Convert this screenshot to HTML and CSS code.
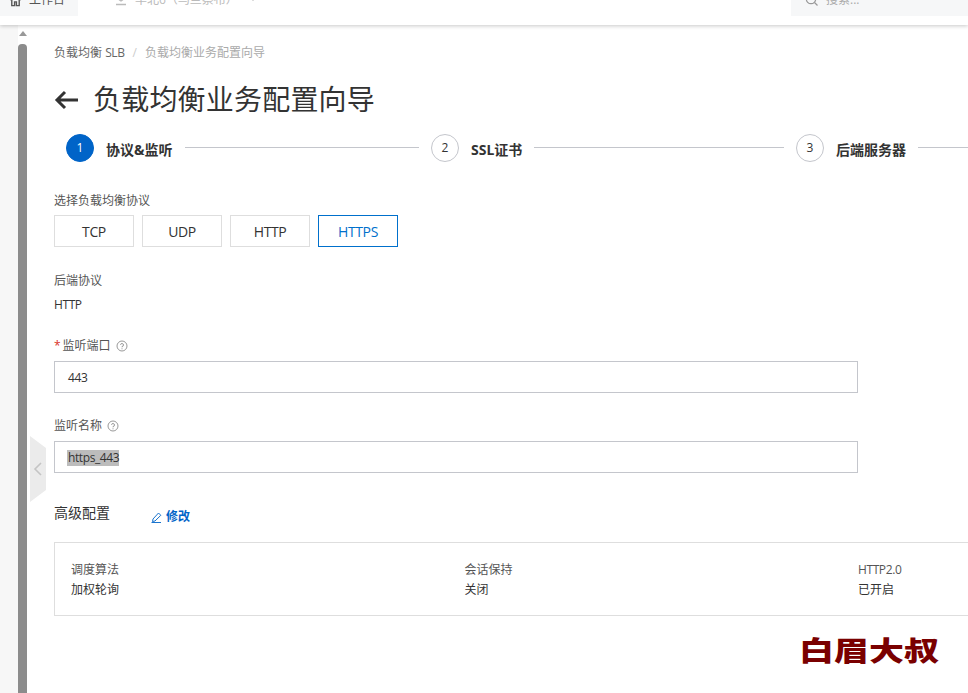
FILE: index.html
```html
<!DOCTYPE html>
<html lang="zh">
<head>
<meta charset="utf-8">
<title>负载均衡业务配置向导</title>
<link rel="stylesheet" href="styles.css">
</head>
<body>
<div class="app">
  <header class="topbar">
    <div class="topbar-inner">
      <div class="workbench">
        <svg class="home-icon" width="13" height="14" viewBox="0 0 14 14"><path d="M1 7 7 2l6 5M3 6v7h3V9h2v4h3V6" fill="none" stroke="#555" stroke-width="1.5"/></svg>
        <span>工作台</span>
      </div>
      <div class="region">
        <svg class="region-icon" width="12" height="16" viewBox="0 0 12 16"><path d="M6 1a3.500 3.500 0 0 1 3.500 3.500C9.500 7 6 9 6 9S2.500 7 2.500 4.500A3.500 3.500 0 0 1 6 1ZM1 12.500h10" fill="none" stroke="#bbb" stroke-width="1.300"/></svg>
        <span>华北6（乌兰察布）</span>
        <svg class="caret" width="8" height="6" viewBox="0 0 8 6"><path d="M0 0h8L4 4z" fill="#bbb"/></svg>
      </div>
      <div class="search">
        <svg class="search-icon" width="14" height="14" viewBox="0 0 14 14"><circle cx="6" cy="6" r="4.700" fill="none" stroke="#999" stroke-width="1.200"/><path d="m9.500 9.500 3 3" stroke="#999" stroke-width="1.200"/></svg>
        <span>搜索...</span>
      </div>
    </div>
  </header>
  <div class="workspace">
    <aside class="rail">
      <div class="scroll-arrow"></div>
      <div class="scroll-thumb"></div>
    </aside>
    <main class="content">
      <nav class="crumbs"><span>负载均衡 <span class="latin">SLB</span></span><i>/</i><span class="crumb-current">负载均衡业务配置向导</span></nav>
      <div class="title-row">
        <svg class="back" width="24" height="20" viewBox="0 0 24 20"><path d="M24 10H2.500M11 2 3 10l8 8" fill="none" stroke="#333" stroke-width="3"/></svg>
        <h1>负载均衡业务配置向导</h1>
      </div>
      <ol class="steps">
        <li class="step active"><span class="num">1</span><span class="step-label">协议&amp;监听</span><span class="step-line"></span></li>
        <li class="step"><span class="num">2</span><span class="step-label">SSL证书</span><span class="step-line"></span></li>
        <li class="step"><span class="num">3</span><span class="step-label">后端服务器</span><span class="step-line"></span></li>
      </ol>
      <div class="label first">选择负载均衡协议</div>
      <div class="protocols">
        <button class="proto">TCP</button>
        <button class="proto">UDP</button>
        <button class="proto">HTTP</button>
        <button class="proto selected">HTTPS</button>
      </div>
      <div class="label backend">后端协议</div>
      <div class="value latin">HTTP</div>
      <div class="label port"><span class="req">*</span>监听端口<svg class="help" width="12" height="12" viewBox="0 0 12 12"><use href="#help"/></svg></div>
      <div class="field latin">443</div>
      <div class="label name">监听名称<svg class="help" width="12" height="12" viewBox="0 0 12 12"><use href="#help"/></svg></div>
      <div class="field latin"><span class="sel">https_443</span></div>
      <div class="adv-row">
        <h2>高级配置</h2>
        <a class="edit"><svg width="11" height="11" viewBox="0 0 11 11"><path d="M7.500 1 9.800 3.300 4 9 1.500 9.500 2 7zM.5 10.500h9.500" fill="none" stroke="#0064c8" stroke-width=".9"/></svg>修改</a>
      </div>
      <div class="summary">
        <div class="cell"><div>调度算法</div><div class="val">加权轮询</div></div>
        <div class="cell"><div>会话保持</div><div class="val">关闭</div></div>
        <div class="cell"><div class="latin">HTTP2.0</div><div class="val">已开启</div></div>
      </div>
    </main>
  </div>
  <div class="collapse"><svg width="10" height="14" viewBox="0 0 10 14"><path d="M8 1 2 7l6 6" fill="none" stroke="#c4c4c4" stroke-width="1.600"/></svg></div>
  <div class="watermark">白眉大叔</div>
</div>
<svg class="defs" width="0" height="0"><symbol id="help" viewBox="0 0 12 12"><circle cx="6" cy="6" r="5" fill="none" stroke="#999"/><path d="M4.500 4.800A1.500 1.500 0 1 1 6 6.500v.8M6 8.300v1" fill="none" stroke="#999"/></symbol></svg>
</body>
</html>
```
FILE: styles.css
```css
* { box-sizing: border-box; }
html, body { margin: 0; height: 100%; overflow: hidden; background: #fff; }
body { font: 12px/16px "Open Sans", "Noto Sans CJK SC", sans-serif; color: #333; }
.app { position: relative; width: 968px; height: 693px; overflow: hidden; display: flex; flex-direction: column; }
.defs { position: absolute; }
.latin { letter-spacing: -.4px; }

.topbar { flex: none; height: 25px; overflow: hidden; background: #fff; box-shadow: 0 1px 4px rgba(0,0,0,.22); position: relative; z-index: 2; }
.topbar-inner { display: flex; align-items: center; height: 32px; margin-top: -16px; font-size: 12px; }
.workbench { width: 78px; height: 32px; background: #f6f7f8; display: flex; align-items: center; padding-left: 9px; gap: 7px; color: #555; }
.region { display: flex; align-items: center; margin-left: 37px; color: #bbb; }
.region-icon { margin-right: 8px; }
.caret { margin-left: 11px; }
.search { margin-left: auto; width: 177px; height: 32px; background: #f6f7f8; display: flex; align-items: center; padding-left: 14px; gap: 7px; color: #aaa; }

.workspace { flex: 1; display: flex; min-height: 0; }
.rail { flex: none; width: 30px; padding-left: 18px; background: linear-gradient(to right, #f7f7f7 18px, #fff 18px); display: flex; flex-direction: column; }
.scroll-arrow { margin: 6px 0 0 1px; width: 0; height: 0; border: 4px solid transparent; border-top: 0; border-bottom: 5px solid #999; }
.scroll-thumb { width: 9px; flex: 1; margin-top: 8px; background: #8c8c8c; border-radius: 4px 4px 0 0; }

.content { flex: 1; padding: 20px 0 0 24px; min-width: 0; }
.crumbs { display: flex; align-items: center; color: #666; height: 16px; }
.crumbs i { font-style: normal; color: #ccc; margin: 0 8px; }
.crumb-current { color: #aaa; }
.title-row { display: flex; align-items: center; margin-top: 18px; height: 40px; }
.back { margin: 2px 15px 0 0; }
h1 { margin: 0 0 2px; font-size: 28px; font-weight: 400; line-height: 38px; letter-spacing: .2px; color: #333; white-space: nowrap; font-family: "Noto Sans CJK SC", sans-serif; }
.steps { list-style: none; margin: 15px 0 0 12px; padding: 0; display: flex; width: 1100px; height: 28px; }
.step { flex: none; width: 365px; display: flex; align-items: center; }
.num { flex: none; width: 28px; height: 28px; border-radius: 50%; border: 1px solid #c4c6cc; display: flex; align-items: center; justify-content: center; }
.active .num { background: #0064c8; border-color: #0064c8; color: #fff; }
.step-label { margin: 3px 0 0 12px; font-size: 14px; font-weight: 700; white-space: nowrap; color: #333; font-family: "Noto Sans", "Noto Sans CJK SC", sans-serif; }
.step-line { flex: 1; height: 1px; margin: -2px 12px 0; background: #c4c6cc; }

.label { color: #555; height: 16px; }
.first { margin-top: 31px; }
.protocols { display: flex; gap: 8px; margin-top: 6px; }
.proto { width: 80px; height: 32px; padding: 1px 0 0; border: 1px solid #dedede; background: #fff; font: inherit; font-size: 14px; letter-spacing: -.4px; color: #333; }
.selected { border-color: #0070cc; color: #0070cc; }
.backend { margin-top: 26px; }
.value { margin-top: 8px; height: 16px; }
.port { margin-top: 25px; }
.req { color: #d93026; margin-right: 2px; }
.help { vertical-align: -2px; margin-left: 5px; }
.field { width: 804px; height: 32px; margin-top: 7px; border: 1px solid #c4c6cc; padding: 1px 12px 0 13px; line-height: 30px; }
.sel { background: #bcbcbc; display: inline-block; line-height: 16px; margin-left: -1px; padding-left: 1px; }
.name { margin-top: 25px; }
.adv-row { display: flex; align-items: flex-end; margin-top: 32px; height: 18px; }
h2 { margin: 0 0 1px; font-size: 14px; font-weight: 400; line-height: 18px; color: #333; }
.edit { display: flex; align-items: center; gap: 4px; margin: 0 0 -2px 41px; color: #0064c8; font-weight: 700; font-family: "Noto Sans", "Noto Sans CJK SC", sans-serif; }
.summary { display: flex; width: 1000px; height: 74px; margin-top: 19px; padding: 19px 0 0 16px; border: 1px solid #dedede; }
.cell { flex: none; width: 393.500px; color: #555; }
.val { margin-top: 4px; color: #333; }

.collapse { position: absolute; left: 30px; top: 436px; width: 16px; height: 66px; background: #ebebeb; clip-path: polygon(0 0, 100% 12px, 100% 54px, 0 100%); display: flex; align-items: center; justify-content: center; }
.watermark { position: absolute; left: 799px; top: 628px; font: 900 35px/42px "Noto Sans CJK SC", sans-serif; color: #7a0000; white-space: nowrap; transform: scaleY(.77); }
```
